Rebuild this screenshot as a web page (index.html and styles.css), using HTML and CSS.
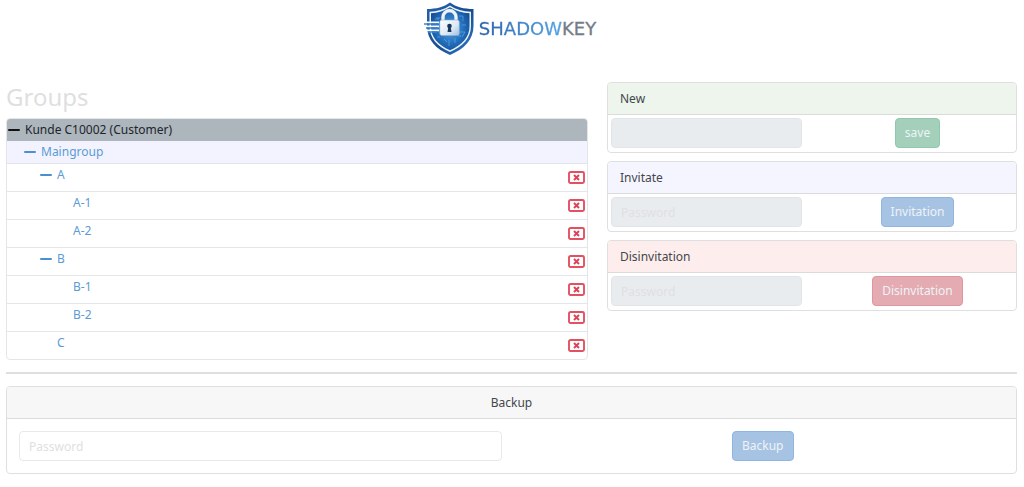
FILE: index.html
```html
<!DOCTYPE html>
<html lang="en">
<head>
<meta charset="utf-8">
<meta name="viewport" content="width=device-width, initial-scale=1">
<title>ShadowKey</title>
<link rel="stylesheet" href="styles.css">
</head>
<body>
<svg class="defs" aria-hidden="true">
  <symbol id="remove" viewBox="0 0 17 13">
    <rect x="1" y="1" width="15" height="11" rx="1.500" fill="none" stroke="#e35060" stroke-width="1.900"/>
    <path d="M6 4l5 5M11 4l-5 5" stroke="#dc4457" stroke-width="2"/>
  </symbol>
</svg>
<header class="brand">
  <svg class="brand-mark" viewBox="0 0 50 54" aria-hidden="true">
    <defs>
      <linearGradient id="edge" x1="0" y1="0" x2="1" y2="1">
        <stop offset="0" stop-color="#2462ad"/><stop offset=".55" stop-color="#184c90"/><stop offset="1" stop-color="#2f80cc"/>
      </linearGradient>
      <radialGradient id="field" cx=".5" cy=".5" r=".6">
        <stop offset="0" stop-color="#4fa6e4"/><stop offset=".6" stop-color="#226cba"/><stop offset="1" stop-color="#164a90"/>
      </radialGradient>
      <linearGradient id="metal" x1="0" y1="0" x2="1" y2="1">
        <stop offset="0" stop-color="#ffffff"/><stop offset=".6" stop-color="#dce8f3"/><stop offset="1" stop-color="#9ebfdd"/>
      </linearGradient>
    </defs>
    <path d="M26 .5C20 5 12 7 3 7v17c0 14 9 23 23 29 14-6 23.500-15 23.500-29V7C40 7 32 5 26 .5z" fill="url(#edge)"/>
    <path d="M26 3.500C20 7.500 13 9.500 5.500 9.700V24c0 12 7.500 20.500 20.500 26 13-5.500 21-14 21-26V9.700C39 9.500 32 7.500 26 3.500z" fill="#e8f3fc"/>
    <path d="M26 5.200C20 9 14 11 7 11.200V24c0 11.500 7 19 19 24.200C38 43 45.500 35.500 45.500 24V11.200C38 11 32 9 26 5.200z" fill="url(#field)"/>
    <path d="M35 14h4v5m-1 4h4m-6 7h5l-3 5m-7 1v5m-6-3v6m-5-7l3 3M12 16h4m-5 1h4m-2 18h3m18-1h3" fill="none" stroke="#6bb9ed" stroke-width=".8" opacity=".7"/>
    <path d="M0 20.300h15M2 24.300h13M3 28.300h12" stroke="#ffffff" stroke-width="1.800"/>
    <path d="M0 22h14M2 26h12M4 30h9" stroke="#3d87cc" stroke-width="1.500"/>
    <path d="M19 19v-4a6.500 6.300 0 0 1 13 0v4" fill="none" stroke="#5f87b2" stroke-width="4.200"/>
    <path d="M19 19v-4a6.500 6.300 0 0 1 13 0v4" fill="none" stroke="#edf4fa" stroke-width="3.200"/>
    <rect x="15.800" y="18" width="19.500" height="15.500" rx="2" fill="url(#metal)" stroke="#87add3" stroke-width=".6"/>
    <circle cx="25.500" cy="24" r="2.300" fill="#17375e"/>
    <path d="M24.500 24h2l1 6h-4z" fill="#17375e"/>
  </svg>
  <span class="brand-name"><span class="brand-shadow">SHADOW</span><span class="brand-key">KEY</span></span>
</header>

<main class="page">
  <div class="columns">
    <section>
      <h1 class="title">Groups</h1>
      <ul class="tree">
        <li class="row root"><button class="toggle" aria-label="Collapse Kunde C10002"></button><span>Kunde C10002 (Customer)</span></li>
        <li class="row main level-1"><button class="toggle" aria-label="Collapse Maingroup"></button><a href="#maingroup">Maingroup</a></li>
        <li class="row item level-2"><button class="toggle" aria-label="Collapse A"></button><a href="#a">A</a><button class="remove" aria-label="Remove A"><svg><use href="#remove"/></svg></button></li>
        <li class="row item level-3"><span class="toggle-space"></span><a href="#a-1">A-1</a><button class="remove" aria-label="Remove A-1"><svg><use href="#remove"/></svg></button></li>
        <li class="row item level-3"><span class="toggle-space"></span><a href="#a-2">A-2</a><button class="remove" aria-label="Remove A-2"><svg><use href="#remove"/></svg></button></li>
        <li class="row item level-2"><button class="toggle" aria-label="Collapse B"></button><a href="#b">B</a><button class="remove" aria-label="Remove B"><svg><use href="#remove"/></svg></button></li>
        <li class="row item level-3"><span class="toggle-space"></span><a href="#b-1">B-1</a><button class="remove" aria-label="Remove B-1"><svg><use href="#remove"/></svg></button></li>
        <li class="row item level-3"><span class="toggle-space"></span><a href="#b-2">B-2</a><button class="remove" aria-label="Remove B-2"><svg><use href="#remove"/></svg></button></li>
        <li class="row item level-2"><span class="toggle-space"></span><a href="#c">C</a><button class="remove" aria-label="Remove C"><svg><use href="#remove"/></svg></button></li>
      </ul>
    </section>

    <div class="cards">
      <form class="card">
        <label class="card-header green" for="new-name">New</label>
        <div class="card-body">
          <input class="field" id="new-name" type="text" disabled>
          <button class="btn btn-green" type="button" disabled>save</button>
        </div>
      </form>
      <form class="card">
        <label class="card-header blue" for="invite-password">Invitate</label>
        <div class="card-body">
          <input class="field" id="invite-password" type="password" placeholder="Password" disabled>
          <button class="btn btn-blue" type="button" disabled>Invitation</button>
        </div>
      </form>
      <form class="card">
        <label class="card-header red" for="disinvite-password">Disinvitation</label>
        <div class="card-body">
          <input class="field" id="disinvite-password" type="password" placeholder="Password" disabled>
          <button class="btn btn-red" type="button" disabled>Disinvitation</button>
        </div>
      </form>
    </div>
  </div>

  <hr class="divider">

  <form class="card">
    <label class="card-header centered" for="backup-password">Backup</label>
    <div class="card-body roomy">
      <input class="field" id="backup-password" type="password" placeholder="Password">
      <button class="btn btn-blue" type="button" disabled>Backup</button>
    </div>
  </form>
</main>
</body>
</html>
```
FILE: styles.css
```css
* { box-sizing: border-box; }

body {
  margin: 0;
  background: #fff;
  color: #212529;
  font-family: "Noto Sans", sans-serif;
  font-size: 12px;
  line-height: 22px;
}

button, input { font: inherit; }

.defs { display: none; }

.brand {
  display: flex;
  justify-content: center;
  align-items: center;
  gap: 5px;
  padding: 2px 4px 0 0;
}

.brand-mark { width: 50px; height: 54px; }

.brand-name {
  font-family: "DejaVu Sans", sans-serif;
  font-size: 18px;
  -webkit-text-stroke: 0.3px;
}

.brand-shadow {
  background: linear-gradient(90deg, #2c62ae, #55a4e4);
  background-clip: text;
  -webkit-background-clip: text;
  color: transparent;
}

.brand-key { color: #747d87; }

.page { padding: 26px 7px 0 6px; }

.columns {
  display: grid;
  grid-template-columns: 582fr 410fr;
  gap: 19px;
  align-items: start;
}

.title {
  margin: 0 0 6px;
  color: #dfdfdf;
  font-size: 24px;
  font-weight: 400;
  line-height: 30px;
}

.tree {
  margin: 0;
  padding: 0;
  list-style: none;
  border: 1px solid #e3e6e9;
  border-radius: 4px;
  overflow: hidden;
}

.row {
  display: flex;
  align-items: flex-start;
  padding: 0 2px 0 1px;
  border-bottom: 1px solid #e3e6e9;
}

.row a { color: #5b9bd5; text-decoration: none; }
.root { background: #adb5bd; border-bottom: 0; }
.main { background: #f3f3ff; }
.item { min-height: 28px; }
.item:last-child { min-height: 27px; border-bottom: 0; }
.level-1 { padding-left: 17px; }
.level-2 { padding-left: 33px; }
.level-3 { padding-left: 49px; }

.toggle, .toggle-space { width: 17px; height: 22px; flex: none; }

.toggle {
  display: flex;
  align-items: center;
  padding: 0;
  border: 0;
  background: none;
  color: #4a8fd0;
}

.toggle::before {
  content: "";
  width: 12px;
  height: 2px;
  border-radius: 1px;
  background: currentColor;
}

.root .toggle { color: #111; }

.remove {
  display: flex;
  align-self: center;
  margin-left: auto;
  padding: 0;
  border: 0;
  background: none;
}

.remove svg { width: 17px; height: 13px; }

.cards { display: grid; gap: 8px; }

.card {
  border: 1px solid #dfdfdf;
  border-radius: 4px;
  overflow: hidden;
}

.card-header {
  display: block;
  padding: 5px 12px 4px;
  border-bottom: 1px solid #dadcdc;
  background: #f7f7f7;
  color: #43474b;
}

.green { background: #edf5ec; }
.blue { background: #f5f5ff; }
.red { background: #fdeeed; }
.centered { text-align: center; }

.card-body {
  display: grid;
  grid-template-columns: 1fr 1fr;
  gap: 20px;
  padding: 3px 3px 4px;
}

.roomy { padding: 12px; }

.field {
  width: 100%;
  min-width: 0;
  height: 30px;
  padding: 0 9px;
  border: 1px solid #e9e9ea;
  border-radius: 4px;
  background: #fff;
}

.field:disabled { border-color: #e2e5e8; background: #e9ecef; }
.field::placeholder { color: #dfe0e1; opacity: 1; }

.btn {
  justify-self: center;
  height: 30px;
  padding: 0 9px;
  border: 1px solid;
  border-radius: 4px;
  color: #edf3f7;
}

.btn-green { background: #a4cfbb; border-color: #90c8ad; }
.btn-blue { background: #a7c3e3; border-color: #8fb6e1; }
.btn-red { background: #e4abb2; border-color: #e095a0; }

.divider {
  height: 2px;
  margin: 12px 0;
  border: 0;
  background: #dfdfdf;
}
```
